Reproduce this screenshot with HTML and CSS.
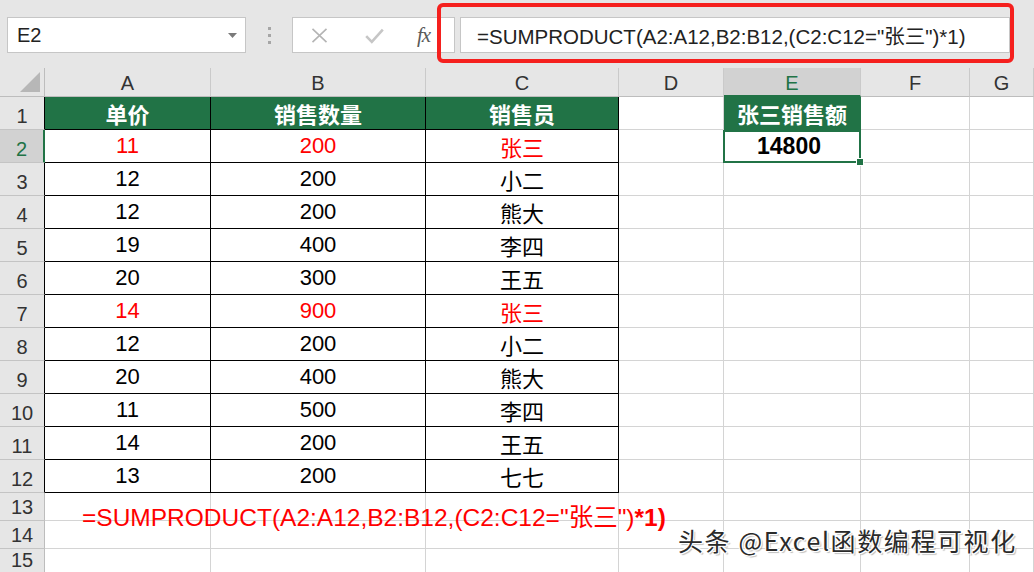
FILE: index.html
```html
<!DOCTYPE html>
<html lang="zh">
<head>
<meta charset="utf-8">
<title>SUMPRODUCT</title>
<link rel="stylesheet" href="styles.css">
</head>
<body>
<div class="app">
  <div class="toolbar">
    <div class="namebox">
      <span class="namebox-text">E2</span>
      <svg class="dd" width="9" height="5" viewBox="0 0 9 5"><path d="M0 0H9L4.5 5Z" fill="#7a7a7a"/></svg>
    </div>
    <div class="dots"><i></i><i></i><i></i></div>
    <div class="fnbox">
      <svg class="ic-x" width="17" height="15" viewBox="0 0 17 15"><path d="M1.5 0.8L15.5 14.2M15.5 0.8L1.5 14.2" stroke="#b4b4b4" stroke-width="1.6" fill="none"/></svg>
      <svg class="ic-ok" width="19" height="16" viewBox="0 0 19 16"><path d="M1.2 8.2L6.8 13.8L17.8 1.6" stroke="#c6c6c6" stroke-width="2.6" fill="none"/></svg>
      <span class="fx">fx</span>
    </div>
    <div class="formula">=SUMPRODUCT(A2:A12,B2:B12,(C2:C12="张三")*1)</div>
  </div>

  <div class="sheet">
    <div class="corner"><span class="tri"></span></div>
    <div class="ch">A</div><div class="ch">B</div><div class="ch">C</div><div class="ch">D</div><div class="ch sel">E</div><div class="ch">F</div><div class="ch">G</div>

    <div class="rh tb">1</div><div class="c t hd">单价</div><div class="c t hd">销售数量</div><div class="c t hd">销售员</div><div class="c"></div><div class="c hd hde">张三销售额</div><div class="c"></div><div class="c"></div>
    <div class="rh tb rsel">2</div><div class="c t red">11</div><div class="c t red">200</div><div class="c t red">张三</div><div class="c"></div><div class="c active">14800</div><div class="c"></div><div class="c"></div>
    <div class="rh tb">3</div><div class="c t">12</div><div class="c t">200</div><div class="c t">小二</div><div class="c"></div><div class="c"></div><div class="c"></div><div class="c"></div>
    <div class="rh tb">4</div><div class="c t">12</div><div class="c t">200</div><div class="c t">熊大</div><div class="c"></div><div class="c"></div><div class="c"></div><div class="c"></div>
    <div class="rh tb">5</div><div class="c t">19</div><div class="c t">400</div><div class="c t">李四</div><div class="c"></div><div class="c"></div><div class="c"></div><div class="c"></div>
    <div class="rh tb">6</div><div class="c t">20</div><div class="c t">300</div><div class="c t">王五</div><div class="c"></div><div class="c"></div><div class="c"></div><div class="c"></div>
    <div class="rh tb">7</div><div class="c t red">14</div><div class="c t red">900</div><div class="c t red">张三</div><div class="c"></div><div class="c"></div><div class="c"></div><div class="c"></div>
    <div class="rh tb">8</div><div class="c t">12</div><div class="c t">200</div><div class="c t">小二</div><div class="c"></div><div class="c"></div><div class="c"></div><div class="c"></div>
    <div class="rh tb">9</div><div class="c t">20</div><div class="c t">400</div><div class="c t">熊大</div><div class="c"></div><div class="c"></div><div class="c"></div><div class="c"></div>
    <div class="rh tb">10</div><div class="c t">11</div><div class="c t">500</div><div class="c t">李四</div><div class="c"></div><div class="c"></div><div class="c"></div><div class="c"></div>
    <div class="rh tb">11</div><div class="c t">14</div><div class="c t">200</div><div class="c t">王五</div><div class="c"></div><div class="c"></div><div class="c"></div><div class="c"></div>
    <div class="rh tb">12</div><div class="c t">13</div><div class="c t">200</div><div class="c t">七七</div><div class="c"></div><div class="c"></div><div class="c"></div><div class="c"></div>
    <div class="rh">13</div><div class="c"></div><div class="c"></div><div class="c"></div><div class="c"></div><div class="c"></div><div class="c"></div><div class="c"></div>
    <div class="rh">14</div><div class="c"></div><div class="c"></div><div class="c"></div><div class="c"></div><div class="c"></div><div class="c"></div><div class="c"></div>
    <div class="rh">15</div><div class="c"></div><div class="c"></div><div class="c"></div><div class="c"></div><div class="c"></div><div class="c"></div><div class="c"></div>
  </div>

  <div class="annot-box"></div>
  <div class="annot-text">=SUMPRODUCT(A2:A12,B2:B12,(C2:C12="张三")<b>*1)</b></div>
  <div class="watermark">头条 @Excel函数编程可视化</div>
</div>
</body>
</html>
```

FILE: styles.css
```css
* { box-sizing: border-box; }
html, body { margin: 0; padding: 0; }
body {
  width: 1034px;
  height: 572px;
  overflow: hidden;
  background: #ffffff;
  font-family: "Liberation Sans", "Noto Sans CJK SC", sans-serif;
  color: #000;
}
.app { position: relative; width: 1034px; height: 572px; overflow: hidden; }

/* toolbar */
.toolbar {
  height: 68px;
  background: #e6e6e6;
  display: flex;
  align-items: flex-start;
  padding-top: 17px;
  padding-left: 7px;
}
.namebox {
  width: 239px;
  height: 36px;
  background: #fff;
  border: 1px solid #c6c6c6;
  display: flex;
  align-items: center;
  justify-content: space-between;
  padding: 0 8px 0 9px;
}
.namebox-text { font-size: 20px; color: #222; }
.dots {
  width: 46px;
  height: 36px;
  display: flex;
  flex-direction: column;
  align-items: center;
  justify-content: center;
  gap: 4px;
}
.dots i { display: block; width: 3px; height: 3px; background: #a6a6a6; }
.fnbox {
  width: 163px;
  height: 36px;
  background: #fff;
  border: 1px solid #c6c6c6;
  display: flex;
  align-items: center;
}
.ic-x { margin-left: 18px; }
.ic-ok { margin-left: 37px; margin-top: 2px; }
.fx {
  margin-left: 33px;
  font-family: "Liberation Serif", serif;
  font-style: italic;
  font-size: 21px;
  color: #5a5a5a;
  letter-spacing: -1px;
}
.formula {
  margin-left: 5px;
  width: 550px;
  height: 36px;
  background: #fff;
  border: 1px solid #c6c6c6;
  display: flex;
  align-items: center;
  padding-left: 16px;
  font-size: 20.5px;
  color: #222;
  white-space: nowrap;
}

/* sheet grid */
.sheet {
  display: grid;
  grid-template-columns: 45px 166px 215px 193px 105px 137px 109px 1fr;
  grid-template-rows: 29px repeat(12, 33px) 28px 28px 1fr;
  height: 504px;
}
.corner {
  background: #e6e6e6;
  border-right: 1px solid #bdbdbd;
  border-bottom: 1px solid #bdbdbd;
  position: relative;
}
.tri {
  position: absolute;
  right: 4px;
  bottom: 4px;
  width: 0;
  height: 0;
  border-left: 20px solid transparent;
  border-bottom: 20px solid #b7b7b7;
}
.ch {
  background: #e6e6e6;
  border-right: 1px solid #cacaca;
  border-bottom: 1px solid #bdbdbd;
  display: flex;
  align-items: center;
  justify-content: center;
  padding-top: 3px;
  font-size: 20px;
  color: #333;
}
.ch.sel {
  background: #d2d2d2;
  color: #217346;
  border-bottom: 2px solid #217346;
}
.rh {
  background: #e6e6e6;
  border-right: 1px solid #bdbdbd;
  border-bottom: 1px solid #c4c4c4;
  display: flex;
  align-items: flex-end;
  justify-content: center;
  padding-bottom: 1px;
  font-size: 20px;
  color: #333;
}
.rh.tb { border-right-color: #000; }
.rh.rsel {
  background: #d2d2d2;
  color: #217346;
  border-right: 2px solid #217346;
}
.c {
  border-right: 1px solid #d4d4d4;
  border-bottom: 1px solid #d4d4d4;
  display: flex;
  align-items: center;
  justify-content: center;
  font-size: 22px;
  white-space: nowrap;
}
.c.t { border-right-color: #000; border-bottom-color: #000; }
.c.hd {
  background: #217346;
  color: #fff;
  font-weight: bold;
}
.c.hde { border-right-color: #217346; border-bottom-color: #217346; }
.c.red { color: #ff0000; }
.c.active {
  position: relative;
  font-weight: bold;
  font-size: 23px;
  padding-right: 6px;
}
.c.active::before {
  content: "";
  position: absolute;
  left: -1px;
  top: 0;
  right: -1px;
  bottom: -1px;
  border: 2px solid #217346;
}
.c.active::after {
  content: "";
  position: absolute;
  right: -4px;
  bottom: -4px;
  width: 6px;
  height: 6px;
  background: #217346;
  border: 1px solid #fff;
}

/* overlays */
.annot-box {
  position: absolute;
  left: 437px;
  top: 3px;
  width: 577px;
  height: 60px;
  border: 4px solid #f5201e;
  border-radius: 6px;
}
.annot-text {
  position: absolute;
  left: 82px;
  top: 503px;
  font-size: 24.5px;
  line-height: 30px;
  color: #ff0000;
  white-space: nowrap;
}
.annot-text b { font-weight: bold; }
.watermark {
  position: absolute;
  left: 678px;
  top: 524px;
  font-family: "Noto Sans CJK SC", sans-serif;
  font-size: 25px;
  line-height: 32px;
  letter-spacing: 1.6px;
  color: #2a2a2a;
  white-space: nowrap;
  text-shadow: 1px 1px 0 #fff, -1px -1px 0 #fff, 1px -1px 0 #fff, -1px 1px 0 #fff, 2px 2px 1px rgba(0,0,0,0.25);
}
```
